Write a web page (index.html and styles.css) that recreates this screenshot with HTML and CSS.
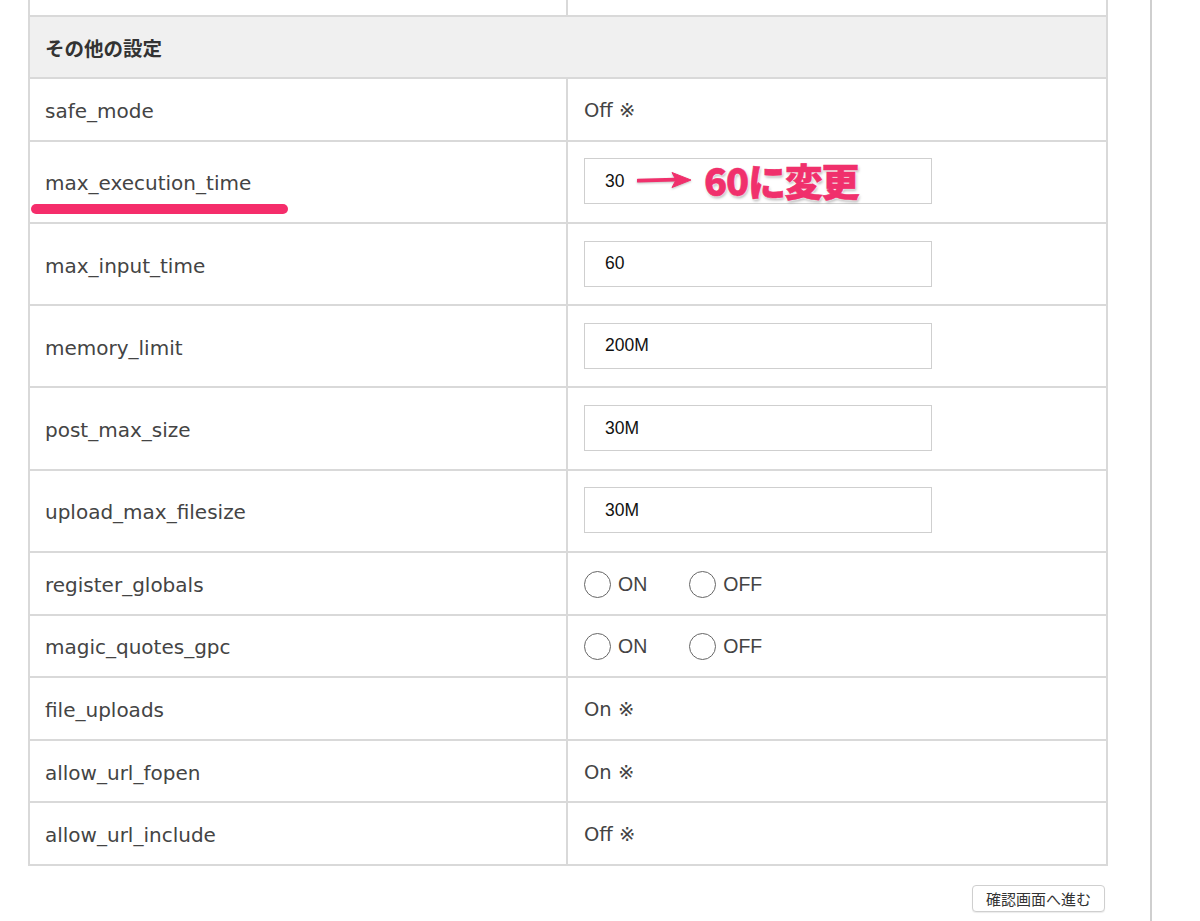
FILE: index.html
```html
<!DOCTYPE html>
<html lang="ja">
<head>
<meta charset="UTF-8" />
<title>PHP設定</title>
<link rel="stylesheet" href="styles.css">
</head>
<body>
  <div class="page">
    <div class="main">
      <div class="settings">
        <div class="row top">
          <div class="label"></div>
          <div class="value"></div>
        </div>
        <div class="row head">
          <div class="title">その他の設定</div>
        </div>

        <div class="row">
          <div class="label">safe_mode</div>
          <div class="value">Off ※</div>
        </div>
        <div class="row tall">
          <div class="label mark">max_execution_time<span class="underline"></span></div>
          <div class="value note">
            <input class="field" type="text" value="30" />
            <span class="memo">
              <svg class="arrow" width="56" height="20" viewBox="0 0 56 20">
                <path d="M1 10.6 L38 9.6" stroke="#f0306c" stroke-width="3.8" stroke-linecap="round" fill="none"/>
                <path d="M35 2.5 L54 10 L35 17.5 L39 10 Z" fill="#f0306c" stroke="#f0306c" stroke-width="1" stroke-linejoin="round"/>
              </svg>
              <span class="memo-text">60に変更</span>
            </span>
          </div>
        </div>
        <div class="row tall">
          <div class="label">max_input_time</div>
          <div class="value"><input class="field" type="text" value="60" /></div>
        </div>
        <div class="row tall">
          <div class="label">memory_limit</div>
          <div class="value"><input class="field" type="text" value="200M" /></div>
        </div>
        <div class="row tall">
          <div class="label">post_max_size</div>
          <div class="value"><input class="field" type="text" value="30M" /></div>
        </div>
        <div class="row tall">
          <div class="label">upload_max_filesize</div>
          <div class="value"><input class="field" type="text" value="30M" /></div>
        </div>
        <div class="row">
          <div class="label">register_globals</div>
          <div class="value">
            <label class="radio"><span class="dot"></span>ON</label>
            <label class="radio"><span class="dot"></span>OFF</label>
          </div>
        </div>
        <div class="row">
          <div class="label">magic_quotes_gpc</div>
          <div class="value">
            <label class="radio"><span class="dot"></span>ON</label>
            <label class="radio"><span class="dot"></span>OFF</label>
          </div>
        </div>
        <div class="row">
          <div class="label">file_uploads</div>
          <div class="value">On ※</div>
        </div>
        <div class="row">
          <div class="label">allow_url_fopen</div>
          <div class="value">On ※</div>
        </div>
        <div class="row">
          <div class="label">allow_url_include</div>
          <div class="value">Off ※</div>
        </div>
      </div>

      <div class="actions">
        <button type="button" class="next">確認画面へ進む</button>
      </div>
    </div>
  </div>
</body>
</html>
```

FILE: styles.css
```css
body {
  margin: 0;
  background: #fff;
  font-family: "DejaVu Sans", "Noto Sans CJK JP", sans-serif;
  color: #444;
}
.page {
  display: flex;
  min-height: 921px;
}
.main {
  width: 1150px;
  border-right: 2px solid #cfcfcf;
  box-sizing: content-box;
}
.settings {
  margin-left: 28px;
  width: 1080px;
  border-left: 2px solid #d9d9d9;
  border-right: 2px solid #d9d9d9;
  box-sizing: border-box;
}
.row {
  display: grid;
  grid-template-columns: 538px 1fr;
  height: 62.6px;
  border-bottom: 2px solid #d9d9d9;
  box-sizing: border-box;
  font-size: 19.5px;
}
.row.top { height: 17px; }
.row.tall { height: 82.3px; }
.row.head {
  display: flex;
  align-items: center;
  height: 62px;
  background: #f0f0f0;
}
.title {
  padding-left: 15px;
  font-family: "Noto Sans CJK JP", sans-serif;
  font-weight: bold;
  font-size: 19.5px;
  color: #333;
}
.label {
  display: flex;
  align-items: center;
  padding: 3px 0 0 15px;
  border-right: 2px solid #d9d9d9;
  position: relative;
  font-size: 20px;
}
.value {
  display: flex;
  align-items: center;
  padding: 2px 0 0 16px;
}
.row.tall .value { padding-top: 0; }
.field {
  width: 348px;
  height: 46px;
  margin-top: -1px;
  box-sizing: border-box;
  border: 1px solid #cfcfcf;
  padding: 0 20px;
  font-family: "Liberation Sans", Arial, sans-serif;
  font-size: 17.5px;
  color: #111;
  background: #fff;
}
.note { position: relative; }
.memo {
  position: absolute;
  left: 69px;
  top: 16px;
  display: flex;
  align-items: center;
  gap: 11px;
}
.memo-text {
  font-family: "Noto Sans CJK JP", sans-serif;
  font-weight: 900;
  font-size: 38px;
  letter-spacing: -1.2px;
  color: #f0306c;
  line-height: 44px;
  -webkit-text-stroke: 0.6px #f0306c;
  text-shadow: 0 0 2px #fff, 0 0 2px #fff, 0 0 3px #fff, 1px 2px 3px rgba(0, 0, 0, 0.35);
}
.arrow { display: block; filter: drop-shadow(0 1px 1px rgba(0,0,0,0.25)); }
.underline {
  position: absolute;
  left: 1px;
  top: 62px;
  width: 257px;
  height: 10px;
  border-radius: 5px;
  background: #f52d6b;
}
.radio {
  display: flex;
  align-items: center;
  gap: 7px;
  margin-right: 42px;
  font-family: "Liberation Sans", Arial, sans-serif;
  font-size: 19.5px;
  color: #444;
}
.dot {
  width: 25px;
  height: 25px;
  border: 1.5px solid #666;
  border-radius: 50%;
  background: #fff;
}
.actions {
  display: flex;
  justify-content: flex-end;
  width: 1077px;
  margin-left: 28px;
  padding-top: 19px;
}
.next {
  height: 27px;
  padding: 0 13px;
  border: 1px solid #cfcfcf;
  border-radius: 4px;
  background: #fff;
  box-shadow: 0 1px 1px rgba(0,0,0,0.08);
  font-family: "Noto Sans CJK JP", sans-serif;
  font-size: 15px;
  color: #333;
}
```
